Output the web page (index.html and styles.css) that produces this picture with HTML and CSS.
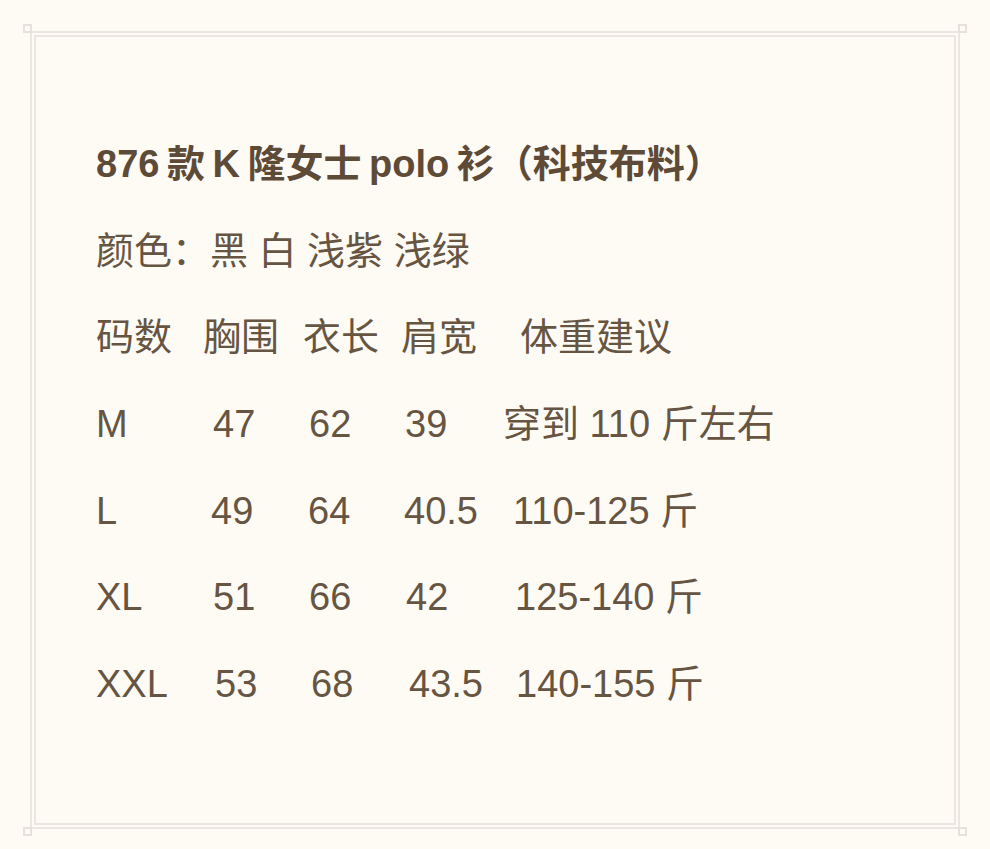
FILE: index.html
```html
<!DOCTYPE html>
<html lang="zh">
<head>
<meta charset="utf-8">
<title>876款K隆女士polo衫</title>
<link rel="stylesheet" href="styles.css">
</head>
<body>
<div class="frame">
  <span class="corner tl"></span><span class="corner tr"></span><span class="corner bl"></span><span class="corner br"></span>
  <div class="frame-inner">
    <h1 class="title">876 款 K 隆女士 polo 衫（科技布料）</h1>
    <p class="line">颜色：黑 白 浅紫 浅绿</p>
    <div class="row head"><span>码数</span><span>胸围</span><span>衣长</span><span>肩宽</span><span>体重建议</span></div>
    <div class="row r-m"><span>M</span><span>47</span><span>62</span><span>39</span><span>穿到 110 斤左右</span></div>
    <div class="row r-l"><span>L</span><span>49</span><span>64</span><span>40.5</span><span>110-125 斤</span></div>
    <div class="row r-xl"><span>XL</span><span>51</span><span>66</span><span>42</span><span>125-140 斤</span></div>
    <div class="row r-xxl"><span>XXL</span><span>53</span><span>68</span><span>43.5</span><span>140-155 斤</span></div>
  </div>
</div>
</body>
</html>
```
FILE: styles.css
```css
html, body {
  margin: 0;
  padding: 0;
  background: #fefbf5;
}
body {
  width: 990px;
  height: 849px;
  overflow: hidden;
  font-family: "Liberation Sans", "Noto Sans CJK SC", sans-serif;
  color: #665543;
}
.frame {
  position: relative;
  box-sizing: border-box;
  margin: 31px 0 0 30px;
  width: 930px;
  height: 798px;
  border: 2px solid #ebe7de;
  padding: 2px;
}
.frame-inner {
  box-sizing: border-box;
  height: 100%;
  border: 2px solid #ebe7de;
  padding: 84px 0 0 60px;
}
.corner {
  position: absolute;
  width: 5px;
  height: 5px;
  border: 2px solid #e6e2d9;
}
.corner.tl { left: -9px; top: -9px; }
.corner.tr { right: -9px; top: -9px; }
.corner.bl { left: -9px; bottom: -9px; }
.corner.br { right: -9px; bottom: -9px; }
.title {
  margin: 0;
  font-size: 38px;
  font-weight: bold;
  line-height: 86.67px;
  color: #5d4a37;
  word-spacing: -3px;
  white-space: nowrap;
}
.line {
  margin: 0;
  font-size: 38px;
  line-height: 86.67px;
}
.row {
  display: grid;
  font-size: 38px;
  line-height: 86.67px;
  white-space: nowrap;
}
.head  { grid-template-columns: 107px 100px 98px 119px auto; }
.r-m   { grid-template-columns: 117px 96px 96px 98px auto; }
.r-l   { grid-template-columns: 115px 97px 96px 109px auto; }
.r-xl  { grid-template-columns: 117px 96px 97px 109px auto; }
.r-xxl { grid-template-columns: 119px 96px 98px 107px auto; }
```
